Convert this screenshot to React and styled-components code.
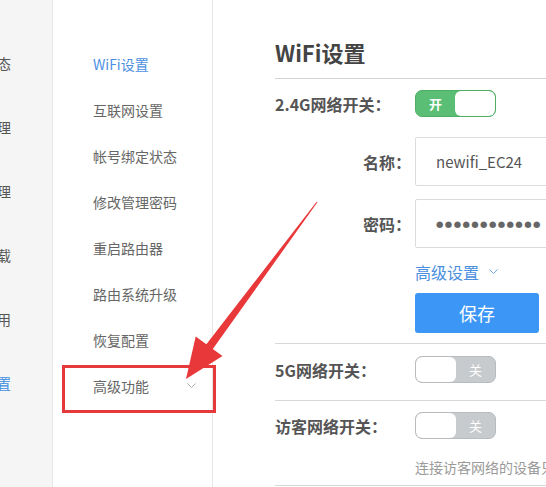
import React from "react";
import styled, { createGlobalStyle, css } from "styled-components";

const GlobalStyle = createGlobalStyle`
  html, body { margin: 0; padding: 0; background: #fff; overflow: hidden; }
  body { font-family: "Noto Sans CJK SC", "Noto Sans", sans-serif; }
`;

const Page = styled.div`
  position: relative;
  display: flex;
  width: 760px;
  height: 487px;
  background: #fff;
`;

const PrimaryNav = styled.nav`
  flex: 0 0 52px;
  background: #f5f5f5;
  border-right: 1px solid #e8e8e8;
  padding-top: 31px;
  overflow: hidden;
`;

const PrimaryItem = styled.div`
  height: 64px;
  display: flex;
  align-items: center;
  justify-content: flex-end;
  padding-right: 41px;
  white-space: nowrap;
  font-size: 14px;
  color: ${(p) => (p.$active ? "#3c8fe0" : "#555")};
`;

const SubNav = styled.nav`
  flex: 0 0 160px;
  box-sizing: border-box;
  border-right: 1px solid #e6e6e6;
  padding: 41px 16px 0 40px;
`;

const SubItem = styled.div`
  height: 46px;
  display: flex;
  align-items: center;
  justify-content: space-between;
  font-size: 14px;
  white-space: nowrap;
  color: ${(p) => (p.$active ? "#4a90e2" : "#666")};
`;

const Main = styled.main`
  flex: 0 0 480px;
  padding: 30px 0 0 62px;
`;

const Title = styled.h1`
  margin: 0;
  font-size: 22px;
  font-weight: 700;
  line-height: 44px;
  color: #444;
  padding-bottom: 4px;
  border-bottom: 1px solid #d3d3d3;
`;

const Section = styled.section`
  display: flex;
  flex-direction: column;
  padding: ${(p) => p.$pad};
  border-bottom: 1px solid #d8d8d8;
`;

const Row = styled.div`
  display: flex;
  align-items: center;
  margin-top: ${(p) => p.$mt || 0}px;
`;

const Label = styled.div`
  flex: 0 0 140px;
  box-sizing: border-box;
  font-size: 16px;
  font-weight: 700;
  color: #555;
  white-space: nowrap;
  ${(p) =>
    p.$right &&
    css`
      text-align: right;
      padding-right: 4px;
    `}
`;

const Toggle = styled.div`
  position: relative;
  box-sizing: border-box;
  width: 81px;
  height: 27px;
  border-radius: 7px;
  display: flex;
  overflow: hidden;
  flex-direction: ${(p) => (p.$on ? "row" : "row-reverse")};
  background: ${(p) => (p.$on ? "#5abe74" : "#c8cbce")};
  border: 1px solid ${(p) => (p.$on ? "#4fae66" : "#b9bcbf")};
`;

const ToggleText = styled.span`
  flex: 1;
  display: flex;
  align-items: center;
  justify-content: center;
  color: #fff;
  font-size: 13px;
  font-weight: ${(p) => (p.$on ? 700 : 400)};
`;

const Knob = styled.span`
  flex: 0 0 40px;
  background: #fff;
  border-radius: 6px;
`;

const Input = styled.div`
  box-sizing: border-box;
  width: 200px;
  height: 49px;
  border: 1px solid #dcdcdc;
  border-radius: 2px;
  padding-left: 20px;
  display: flex;
  align-items: center;
  font-size: 15px;
  color: #555;
`;

const Dots = styled.span`
  font-family: "DejaVu Sans", sans-serif;
  font-size: 8.5px;
  letter-spacing: 1.4px;
  color: #666;
`;

const LinkRow = styled.div`
  display: flex;
  align-items: center;
  gap: 10px;
  margin: 12px 0 0 140px;
  height: 24px;
  font-size: 16px;
  color: #4a8fe0;
`;

const SaveButton = styled.button`
  margin: 9px 0 0 140px;
  width: 124px;
  height: 40px;
  border: 0;
  border-radius: 3px;
  background: #3c96f6;
  color: #fff;
  font-family: inherit;
  font-size: 18px;
  padding: 0;
`;

const Hint = styled.div`
  margin: 18px 0 0 140px;
  height: 20px;
  line-height: 20px;
  font-size: 14px;
  color: #9a9a9a;
  white-space: nowrap;
`;

const HighlightBox = styled.div`
  position: absolute;
  left: 62px;
  top: 365px;
  width: 154px;
  height: 48px;
  box-sizing: border-box;
  border: 3px solid #e5393b;
  pointer-events: none;
`;

const ArrowLayer = styled.svg`
  position: absolute;
  left: 0;
  top: 0;
  pointer-events: none;
`;

const Chevron = ({ color = "#999", size = 9 }) => (
  <svg width={size} height={size * 0.6} viewBox="0 0 10 6">
    <polyline points="0.5,0.5 5,5 9.5,0.5" fill="none" stroke={color} strokeWidth="1.1" />
  </svg>
);

const primary = [
  { t: "路由状态" },
  { t: "终端管理" },
  { t: "存储管理" },
  { t: "离线下载" },
  { t: "插件应用" },
  { t: "路由设置", active: true },
];

const sub = [
  { t: "WiFi设置", active: true },
  { t: "互联网设置" },
  { t: "帐号绑定状态" },
  { t: "修改管理密码" },
  { t: "重启路由器" },
  { t: "路由系统升级" },
  { t: "恢复配置" },
];

export default function App() {
  return (
    <>
      <GlobalStyle />
      <Page>
        <PrimaryNav>
          {primary.map((p) => (
            <PrimaryItem key={p.t} $active={p.active}>
              {p.t}
            </PrimaryItem>
          ))}
        </PrimaryNav>
        <SubNav>
          {sub.map((s) => (
            <SubItem key={s.t} $active={s.active}>
              {s.t}
            </SubItem>
          ))}
          <SubItem>
            高级功能
            <Chevron color="#aaa" size={9} />
          </SubItem>
        </SubNav>
        <Main>
          <Title>WiFi设置</Title>
          <Section $pad="11px 0 10px">
            <Row>
              <Label>2.4G网络开关：</Label>
              <Toggle $on>
                <ToggleText $on>开</ToggleText>
                <Knob />
              </Toggle>
            </Row>
            <Row $mt={20}>
              <Label $right>名称：</Label>
              <Input>newifi_EC24</Input>
            </Row>
            <Row $mt={13}>
              <Label $right>密码：</Label>
              <Input>
                <Dots>●●●●●●●●●●●●</Dots>
              </Input>
            </Row>
            <LinkRow>
              高级设置
              <Chevron color="#6fa6e6" size={9} />
            </LinkRow>
            <SaveButton>保存</SaveButton>
          </Section>
          <Section $pad="12px 0 17px">
            <Row>
              <Label>5G网络开关：</Label>
              <Toggle>
                <ToggleText>关</ToggleText>
                <Knob />
              </Toggle>
            </Row>
          </Section>
          <Section $pad="11px 0 8px">
            <Row>
              <Label>访客网络开关：</Label>
              <Toggle>
                <ToggleText>关</ToggleText>
                <Knob />
              </Toggle>
            </Row>
            <Hint>连接访客网络的设备只能访问互联网</Hint>
          </Section>
        </Main>
        <HighlightBox />
        <ArrowLayer width="546" height="487" viewBox="0 0 546 487">
          <polygon
            fill="#e8383a"
            points="317.4,202.3 316.6,201.7 206.4,344.2 195.7,336.6 186,379 222.5,356.1 212.8,349"
          />
        </ArrowLayer>
      </Page>
    </>
  );
}
